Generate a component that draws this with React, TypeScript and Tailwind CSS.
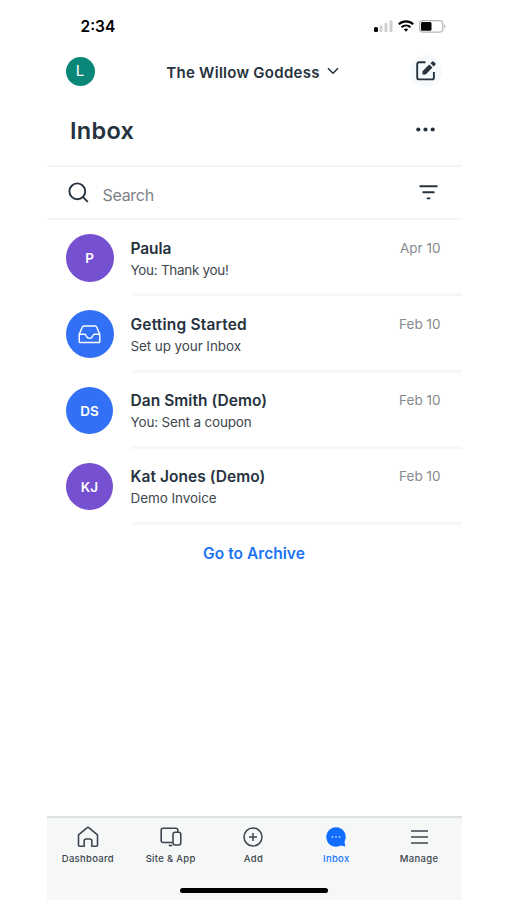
import type { ReactNode } from "react";

type Conversation = {
  name: string;
  preview: string;
  date: string;
  initials?: string;
  avatar: string;
  nameSpacing: string;
  previewSpacing: string;
};

const conversations: Conversation[] = [
  {
    name: "Paula",
    preview: "You: Thank you!",
    date: "Apr 10",
    initials: "P",
    avatar: "size-12 bg-[#7550d0]",
    nameSpacing: "tracking-[-0.1px]",
    previewSpacing: "tracking-[-0.3px]",
  },
  {
    name: "Getting Started",
    preview: "Set up your Inbox",
    date: "Feb 10",
    avatar: "size-12 bg-[#3270f6]",
    nameSpacing: "tracking-[0.2px]",
    previewSpacing: "tracking-[-0.1px]",
  },
  {
    name: "Dan Smith (Demo)",
    preview: "You: Sent a coupon",
    date: "Feb 10",
    initials: "DS",
    avatar: "size-[47px] bg-[#3270f6]",
    nameSpacing: "tracking-[0.05px]",
    previewSpacing: "tracking-[-0.17px]",
  },
  {
    name: "Kat Jones (Demo)",
    preview: "Demo Invoice",
    date: "Feb 10",
    initials: "KJ",
    avatar: "size-[47px] bg-[#7550d0]",
    nameSpacing: "tracking-[0.05px]",
    previewSpacing: "tracking-[-0.07px]",
  },
];

function StatusBar() {
  return (
    <div className="flex h-[50px] items-center justify-between pt-[2px] pr-[16px] pl-[34px] text-black">
      <span className="pt-px text-[15.5px] leading-5 font-semibold">2:34</span>
      <div className="flex items-center gap-[5px]">
        <svg width="19" height="12" viewBox="0 0 19 12">
          <rect x="0" y="7" width="4" height="5" rx="1.5" fill="#000" />
          <rect x="5.5" y="5.5" width="3" height="6.5" rx="0.8" fill="#cfcfcf" />
          <rect x="10.5" y="3" width="3" height="9" rx="0.8" fill="#cfcfcf" />
          <rect x="15.5" y="0.5" width="3" height="11.5" rx="0.8" fill="#cfcfcf" />
        </svg>
        <svg width="16" height="12" viewBox="0 0 16 12" fill="none" stroke="#000" strokeWidth="2.1">
          <path d="M.8 4.3C4.9.4 11.1.4 15.2 4.3" />
          <path d="M3.5 7.3c2.6-2.4 6.4-2.4 9 0" />
          <path d="M5.8 9.3c1.3-1.1 3.1-1.1 4.4 0L8 11.7z" fill="#000" stroke="none" />
        </svg>
        <svg width="27" height="13" viewBox="0 0 27 13">
          <rect x="0.7" y="0.7" width="23" height="11.4" rx="3.2" fill="#fff" stroke="#b5b5b5" strokeWidth="1.2" />
          <rect x="2" y="2" width="10.5" height="8.8" rx="1.6" fill="#000" />
          <path d="M25 4.2c1.8.7 1.8 3.7 0 4.4z" fill="#b5b5b5" />
        </svg>
      </div>
    </div>
  );
}

function Header() {
  return (
    <header className="grid h-[42px] grid-cols-[28px_1fr_32px] items-center pr-[20px] pl-[19px]">
      <span className="flex size-[29px] items-center justify-center rounded-full bg-[#0a8778] text-[15px] text-white">
        L
      </span>
      <button className="flex items-center justify-center gap-[7px] pt-[3px] pl-[2px] text-[15px] leading-5 font-semibold">
        <span className="tracking-[0.27px]">The Willow Goddess</span>
        <svg width="12" height="8" viewBox="0 0 12 8" fill="none" stroke="currentColor" strokeWidth="1.6" className="-mt-[3px]">
          <path d="M1 1.2l5 5 5-5" />
        </svg>
      </button>
      <button className="flex size-8 items-center justify-center rounded-full bg-[#f6f9fb]">
        <svg width="22" height="22" viewBox="0 0 22 22" fill="none" stroke="currentColor" strokeWidth="1.9">
          <path d="M10.5 2.2H4.2a2 2 0 0 0-2 2v13.2a2 2 0 0 0 2 2h12.7a2 2 0 0 0 2-2V12" />
          <path d="M7.5 14.4v-3.2l6.8-6.8 3.2 3.2-6.8 6.8z" fill="currentColor" stroke="none" />
          <path d="M15.5 3.2L17 1.700a1.300 1.300 0 0 1 1.800 0l1.400 1.400a1.300 1.300 0 0 1 0 1.800l-1.500 1.500z" fill="currentColor" stroke="none" />
        </svg>
      </button>
    </header>
  );
}

function TrayIcon() {
  return (
    <svg width="23" height="19" viewBox="0 0 24 20" fill="none" stroke="white" strokeWidth="1.5" strokeLinejoin="round">
      <path d="M1.2 9.8L4.5 2.1a1.6 1.6 0 0 1 1.4-1h12.2a1.6 1.6 0 0 1 1.4 1l3.3 7.7v7.7a1 1 0 0 1-1 1H2.200a1 1 0 0 1-1-1z" />
      <path d="M1.2 9.8h5.2c1.7 0 2 .9 2.4 2 .5 1.4 1.6 2.300 3.200 2.300s2.700-.9 3.200-2.300c.4-1.100.7-2 2.400-2h5.200" />
    </svg>
  );
}

function ConversationRow({ item }: { item: Conversation }) {
  return (
    <li className="flex h-[76.25px] pl-[19px]">
      <div className="flex w-12 items-center justify-center">
        <span
          className={`flex items-center justify-center rounded-full text-[13.5px] font-semibold text-white ${item.avatar}`}
        >
          {item.initials ?? <TrayIcon />}
        </span>
      </div>
      <div className="ml-[17px] flex flex-1 justify-between border-b-[3px] border-[#f6f7f8] pt-[17.5px] pr-[21px]">
        <div>
          <p className={`text-[15.5px] leading-[22px] font-semibold ${item.nameSpacing}`}>
            {item.name}
          </p>
          <p className={`-mt-px text-[13.5px] leading-[22px] text-[#41484f] ${item.previewSpacing}`}>
            {item.preview}
          </p>
        </div>
        <span className="text-[13.5px] leading-[21px] text-[#868a8d]">
          {item.date}
        </span>
      </div>
    </li>
  );
}

function Tab({
  label,
  active,
  children,
}: {
  label: string;
  active?: boolean;
  children: ReactNode;
}) {
  return (
    <button
      className={`flex flex-col items-center ${active ? "text-[#2477fa]" : "text-[#3c454d]"}`}
    >
      <span className="flex h-6 items-center">{children}</span>
      <span className="mt-[2px] text-[9.5px] leading-4 font-medium tracking-[0.3px]">
        {label}
      </span>
    </button>
  );
}

function TabBar() {
  return (
    <nav className="flex h-[84.5px] flex-col items-center border-t-2 border-[#dde1e3] bg-[#f6f8f8]">
      <div className="grid w-full grid-cols-5 pt-[7px] pr-[1px]">
        <Tab label="Dashboard">
          <svg width="22" height="22" viewBox="0 0 22 22" fill="none" stroke="currentColor" strokeWidth="1.6" strokeLinejoin="round">
            <path d="M1.5 8.9L10 1.800a1.500 1.500 0 0 1 2 0l8.500 7.100v10.300a1 1 0 0 1-1 1h-4.700v-5.400A1.800 1.800 0 0 0 13 13H9a1.800 1.800 0 0 0-1.800 1.800v5.400H2.500a1 1 0 0 1-1-1z" />
          </svg>
        </Tab>
        <Tab label="Site &amp; App">
          <svg width="22" height="20" viewBox="0 0 22 20" fill="none" stroke="currentColor" strokeWidth="1.6">
            <path d="M12.5 15.500H3a1.800 1.800 0 0 1-1.800-1.800V3A1.800 1.800 0 0 1 3 1.200h13A1.800 1.800 0 0 1 17.800 3v2" />
            <path d="M8.7 18.500h3.600" />
            <rect x="13" y="5.2" width="7.8" height="12.8" rx="2.2" />
          </svg>
        </Tab>
        <Tab label="Add">
          <svg width="20" height="20" viewBox="0 0 20 20" fill="none" stroke="currentColor" strokeWidth="1.5">
            <circle cx="10" cy="10" r="9" />
            <path d="M10 6v8M6 10h8" />
          </svg>
        </Tab>
        <Tab label="Inbox" active>
          <svg width="20" height="20" viewBox="0 0 20 20">
            <path d="M10 .2a9.800 9.800 0 1 0 4.800 18.400l4.600.9-.9-4.700A9.800 9.800 0 0 0 10 .2z" fill="#116dff" />
            <g fill="#b4d2ff">
              <circle cx="6.4" cy="10" r="0.9" />
              <circle cx="10" cy="10" r="0.9" />
              <circle cx="13.6" cy="10" r="0.9" />
            </g>
          </svg>
        </Tab>
        <Tab label="Manage">
          <svg width="17" height="16" viewBox="0 0 17 16" stroke="currentColor" strokeWidth="1.6">
            <path d="M0 2h17M0 8h17M0 14h17" />
          </svg>
        </Tab>
      </div>
      <div className="mt-[21px] h-[5px] w-[148px] rounded-full bg-black" />
    </nav>
  );
}

export default function App() {
  return (
    <div className="h-[900px] w-[507px] overflow-hidden bg-white font-['Inter',sans-serif] text-[#26323d]">
      <div className="ml-[46.5px] flex h-[900px] w-[415px] flex-col">
        <StatusBar />
        <Header />
        <div className="flex h-[75px] items-center justify-between border-b-2 border-[#f1f4f5] pt-[2px] pr-[27px] pl-[23.5px]">
          <h1 className="pt-[2px] text-[23.5px] leading-8 font-semibold tracking-[0.3px]">
            Inbox
          </h1>
          <svg width="19" height="5" viewBox="0 0 19 5" fill="currentColor">
            <circle cx="2.3" cy="2.5" r="2.1" />
            <circle cx="9.5" cy="2.5" r="2.1" />
            <circle cx="16.7" cy="2.5" r="2.1" />
          </svg>
        </div>
        <div className="flex h-[53px] items-center border-b-2 border-[#f4f5f6] pr-[24px] pl-[21px]">
          <svg width="21" height="21" viewBox="0 0 21 21" fill="none" stroke="currentColor" strokeWidth="1.9">
            <circle cx="9.3" cy="9.3" r="7.9" />
            <path d="M14.8 14.8l5 5" />
          </svg>
          <span className="mt-[4px] ml-[14px] flex-1 text-[16px] tracking-[-0.3px] text-[#7c8186]">
            Search
          </span>
          <svg width="19" height="15" viewBox="0 0 19 15" stroke="currentColor" strokeWidth="1.9">
            <path d="M.5 1.2h18M3.5 7.3h12M7.7 13.4h3.6" />
          </svg>
        </div>
        <ul>
          {conversations.map((item) => (
            <ConversationRow key={item.name} item={item} />
          ))}
        </ul>
        <button className="mx-auto mt-[17.5px] text-[15.5px] leading-[22px] font-semibold tracking-[0.05px] text-[#1a72f5]">
          Go to Archive
        </button>
        <div className="mt-auto">
          <TabBar />
        </div>
      </div>
    </div>
  );
}
